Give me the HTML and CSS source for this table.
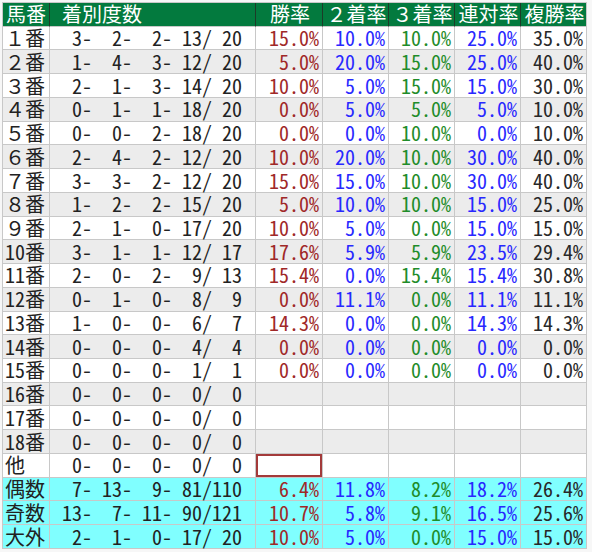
FILE: index.html
```html
<!DOCTYPE html>
<html lang="ja">
<head>
<meta charset="utf-8">
<link rel="stylesheet" href="styles.css">
</head>
<body>
<div class="sheet">
  <div class="row head">
    <div class="c h0">馬番</div>
    <div class="c h1">着別度数</div>
    <div class="c hp">勝率</div>
    <div class="c hp">２着率</div>
    <div class="c hp">３着率</div>
    <div class="c hp">連対率</div>
    <div class="c hp">複勝率</div>
  </div>
</div>
<script src="app.js"></script>
</body>
</html>
```
FILE: app.js
```js
const rows = [
  ["１番", [3,2,2,13,20], ["15.0","10.0","10.0","25.0","35.0"]],
  ["２番", [1,4,3,12,20], ["5.0","20.0","15.0","25.0","40.0"]],
  ["３番", [2,1,3,14,20], ["10.0","5.0","15.0","15.0","30.0"]],
  ["４番", [0,1,1,18,20], ["0.0","5.0","5.0","5.0","10.0"]],
  ["５番", [0,0,2,18,20], ["0.0","0.0","10.0","0.0","10.0"]],
  ["６番", [2,4,2,12,20], ["10.0","20.0","10.0","30.0","40.0"]],
  ["７番", [3,3,2,12,20], ["15.0","15.0","10.0","30.0","40.0"]],
  ["８番", [1,2,2,15,20], ["5.0","10.0","10.0","15.0","25.0"]],
  ["９番", [2,1,0,17,20], ["10.0","5.0","0.0","15.0","15.0"]],
  ["10番", [3,1,1,12,17], ["17.6","5.9","5.9","23.5","29.4"]],
  ["11番", [2,0,2,9,13], ["15.4","0.0","15.4","15.4","30.8"]],
  ["12番", [0,1,0,8,9], ["0.0","11.1","0.0","11.1","11.1"]],
  ["13番", [1,0,0,6,7], ["14.3","0.0","0.0","14.3","14.3"]],
  ["14番", [0,0,0,4,4], ["0.0","0.0","0.0","0.0","0.0"]],
  ["15番", [0,0,0,1,1], ["0.0","0.0","0.0","0.0","0.0"]],
  ["16番", [0,0,0,0,0], null],
  ["17番", [0,0,0,0,0], null],
  ["18番", [0,0,0,0,0], null],
  ["他", [0,0,0,0,0], null, true],
  ["偶数", [7,13,9,81,110], ["6.4","11.8","8.2","18.2","26.4"], false, true],
  ["奇数", [13,7,11,90,121], ["10.7","5.8","9.1","16.5","25.6"], false, true],
  ["大外", [2,1,0,17,20], ["10.0","5.0","0.0","15.0","15.0"], false, true]
];
const sheet = document.querySelector(".sheet");
const cls = ["p1","p2","p3","p4","p5"];
rows.forEach((r, i) => {
  const row = document.createElement("div");
  row.className = "row " + (r[4] ? "sum" : (i % 2 ? "alt" : "plain"));
  let html = '<div class="c c0">' + r[0] + '</div>';
  const n = r[1];
  html += '<div class="c c1"><span>' + n[0] + '-</span><span>' + n[1] + '-</span><span>' + n[2] + '-</span><span>' + n[3] + '/</span><span>' + n[4] + '</span></div>';
  for (let k = 0; k < 5; k++) {
    const extra = (k === 0 && r[3]) ? " focus" : "";
    html += '<div class="c cp ' + cls[k] + extra + '">' + (r[2] ? r[2][k] + "%" : "") + '</div>';
  }
  row.innerHTML = html;
  sheet.appendChild(row);
});
```
FILE: styles.css
```css
html, body {
  margin: 0;
  padding: 0;
  background: #f7f7f7;
}
body {
  font-family: "Noto Sans Mono CJK JP", "Noto Sans CJK JP", sans-serif;
  font-size: 20px;
  line-height: 20px;
  color: #222;
}
.sheet {
  display: grid;
  grid-template-columns: 47px 206px 67px 66px 66px 66px 66px;
  grid-auto-rows: 23.74px;
  width: max-content;
  margin: 2px 0 0 2px;
  border-top: 1px solid #c8c8c8;
  border-left: 1px solid #c8c8c8;
}
.row { display: contents; }
.c {
  box-sizing: border-box;
  border-right: 1px solid #c8c8c8;
  border-bottom: 1px solid #c8c8c8;
  display: flex;
  align-items: center;
  white-space: pre;
}
.head .c {
  background: #037a3e;
  color: #fff;
  border-right-color: #1d3b28;
}
.head .c:last-child { border-right-color: #c8c8c8; }
.h0 { justify-content: center; }
.h1 { padding-left: 12px; }
.hp { justify-content: center; padding-left: 2px; }
.plain .c { background: #fff; }
.alt .c { background: #ececec; }
.sum .c { background: #80ffff; }
.c0 { padding-left: 2px; }
.c1 {
  display: grid;
  grid-template-columns: 42px 40px 40px 40px 30px;
  align-items: center;
}
.c1 span { text-align: right; }
.cp { justify-content: flex-end; padding-right: 3px; }
.p1 { color: #a02828; }
.p2 { color: #2828ff; }
.p3 { color: #1f8c2a; }
.p4 { color: #2828ff; }
.p5 { color: #282828; }
.focus { box-shadow: inset 0 0 0 2px #a33a3a; }
```
